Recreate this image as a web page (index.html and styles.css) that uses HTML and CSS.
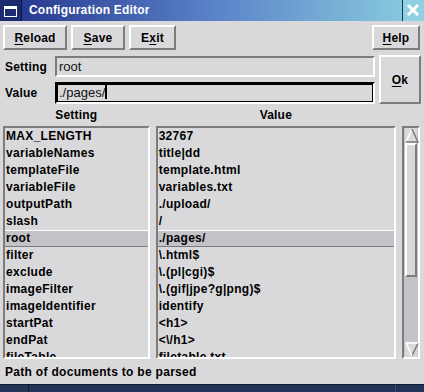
FILE: index.html
```html
<!DOCTYPE html>
<html>
<head>
    <title>Configuration Editor</title>
    <meta charset="UTF-8">
    <link rel="stylesheet" href="styles.css">
</head>
<body>

<div class="titlebar">
    <div class="winicon">
        <svg width="21" height="21" viewBox="0 0 21 21">
            <rect x="4.5" y="6.5" width="12" height="10" fill="none" stroke="#fff" stroke-width="1"/>
            <rect x="4" y="6" width="13" height="3" fill="#fff"/>
        </svg>
    </div>
    <div class="title">Configuration Editor</div>
    <div class="closebox">
        <svg width="21" height="21" viewBox="0 0 21 21">
            <path d="M5 5 L15 15 M15 5 L5 15" stroke="#fff" stroke-width="3"/>
        </svg>
    </div>
</div>

<div class="toolbar">
    <button class="btn reload"><u>R</u>eload</button>
    <button class="btn save"><u>S</u>ave</button>
    <button class="btn exit">E<u>x</u>it</button>
    <span class="spacer"></span>
    <button class="btn help"><u>H</u>elp</button>
</div>

<div class="form">
    <div class="fields">
        <div class="row">
            <label class="lbl">Setting</label>
            <div class="entry">root</div>
        </div>
        <div class="row">
            <label class="lbl">Value</label>
            <div class="entry focus">./pages/<span class="caret"></span></div>
        </div>
    </div>
    <button class="btn ok"><u>O</u>k</button>
</div>

<div class="headers">
    <div class="head keyhead">Setting</div>
    <div class="head valhead">Value</div>
    <div class="head sbhead"></div>
</div>

<div class="lists">
    <div class="listbox keys">
        <div class="item">MAX_LENGTH</div>
        <div class="item">variableNames</div>
        <div class="item">templateFile</div>
        <div class="item">variableFile</div>
        <div class="item">outputPath</div>
        <div class="item">slash</div>
        <div class="item sel">root</div>
        <div class="item">filter</div>
        <div class="item">exclude</div>
        <div class="item">imageFilter</div>
        <div class="item">imageIdentifier</div>
        <div class="item">startPat</div>
        <div class="item">endPat</div>
        <div class="item">fileTable</div>
    </div>
    <div class="listbox vals">
        <div class="item">32767</div>
        <div class="item">title|dd</div>
        <div class="item">template.html</div>
        <div class="item">variables.txt</div>
        <div class="item">./upload/</div>
        <div class="item">/</div>
        <div class="item sel">./pages/</div>
        <div class="item">\.html$</div>
        <div class="item">\.(pl|cgi)$</div>
        <div class="item">\.(gif|jpe?g|png)$</div>
        <div class="item">identify</div>
        <div class="item">&lt;h1&gt;</div>
        <div class="item">&lt;\/h1&gt;</div>
        <div class="item">filetable.txt</div>
    </div>
    <div class="scrollbar">
        <div class="arrow">
            <svg width="14" height="15" viewBox="0 0 14 15">
                <polygon points="7,1 13,14 1,14" fill="#dadada"/>
                <path d="M7 1 L1 14" stroke="#fff" stroke-width="1.5" fill="none"/>
                <path d="M7 1 L13 14 L1 14" stroke="#7a7a7a" stroke-width="1.5" fill="none"/>
            </svg>
        </div>
        <div class="thumb"></div>
        <div class="trough"></div>
        <div class="arrow">
            <svg width="14" height="15" viewBox="0 0 14 15">
                <polygon points="1,1 13,1 7,14" fill="#dadada"/>
                <path d="M13 1 L7 14" stroke="#7a7a7a" stroke-width="1.5" fill="none"/>
                <path d="M7 14 L1 1 L13 1" stroke="#fff" stroke-width="1.5" fill="none"/>
            </svg>
        </div>
    </div>
</div>

<div class="status">Path of documents to be parsed</div>

<div class="taskbar">
    <div class="task first"></div>
    <div class="task middle"></div>
    <div class="task last"></div>
</div>

</body>
</html>
```

FILE: styles.css
```css
body {
    margin: 0;
    width: 424px;
    height: 392px;
    overflow: hidden;
    background-color: #d9d9db;
    font-family: "Liberation Sans", Arial, sans-serif;
    font-size: 12px;
    font-weight: bold;
    color: #000;
}

/* window title */
.titlebar {
    display: flex;
    height: 21px;
    background: linear-gradient(to right, #22328a, #5a82c8 50%, #8ccfe0);
}
.winicon {
    width: 21px;
    height: 21px;
    background-color: #1c2a6e;
    border-right: 1px solid #0c1440;
}
.title {
    flex: 1;
    color: #fff;
    line-height: 21px;
    padding-left: 7px;
    letter-spacing: 0.2px;
}
.closebox {
    width: 21px;
    height: 21px;
    background-color: #8ed2e2;
    border-left: 1px solid #1c3050;
}

/* raised motif style buttons */
.btn {
    font-family: inherit;
    font-size: 12px;
    font-weight: bold;
    color: #000;
    background-color: #d9d9db;
    padding: 0;
    border: 2px solid;
    border-color: #fff #7c7c7c #7c7c7c #fff;
    letter-spacing: 0.2px;
}
.btn u {
    text-decoration-thickness: 1px;
    text-underline-offset: 2px;
}

.toolbar {
    display: flex;
    gap: 4px;
    padding: 4px 4px 0 3px;
    height: 25px;
}
.toolbar .btn {
    height: 25px;
}
.reload { width: 64px; }
.save { width: 54px; }
.exit { width: 47px; }
.help { width: 48px; }
.spacer { flex: 1; }

/* entry rows */
.form {
    display: flex;
    gap: 4px;
    padding: 5px 3px 0 5px;
}
.fields {
    display: flex;
    flex-direction: column;
    gap: 5px;
    padding-top: 1px;
}
.row {
    display: flex;
    align-items: center;
}
.lbl {
    width: 50px;
    letter-spacing: 0.2px;
}
.entry {
    box-sizing: border-box;
    width: 320px;
    height: 21px;
    border: 2px solid;
    border-color: #7c7c7c #fff #fff #7c7c7c;
    font-weight: normal;
    font-size: 13px;
    line-height: 17px;
    padding-left: 2px;
    color: #111;
}
.entry.focus {
    height: 22px;
    box-shadow: inset 0 0 0 1px #000;
    border-color: #000 #fff #fff #000;
}
.caret {
    display: inline-block;
    width: 2px;
    height: 14px;
    background-color: #000;
    vertical-align: -2px;
    margin-left: 0;
}
.ok {
    width: 42px;
    height: 49px;
}

/* column headers */
.headers {
    display: flex;
    gap: 6px;
    padding: 5px 4px 0 3px;
    height: 17px;
}
.head {
    text-align: center;
    line-height: 12px;
    letter-spacing: 0.2px;
}
.keyhead { width: 147px; }
.valhead { width: 241px; }
.sbhead { width: 18px; }

/* lists */
.lists {
    display: flex;
    gap: 6px;
    padding: 0 4px 0 3px;
    height: 233px;
}
.listbox {
    box-sizing: border-box;
    height: 233px;
    overflow: hidden;
    border: 2px solid;
    border-color: #7c7c7c #fff #fff #7c7c7c;
}
.keys { width: 147px; }
.vals { width: 241px; }
.item {
    height: 17px;
    line-height: 17px;
    padding-left: 1px;
    white-space: nowrap;
    letter-spacing: 0.3px;
}
.item.sel {
    background-color: #c3c3c7;
    box-shadow: inset 0 1px 0 #fff, inset 0 -1px 0 #7c7c7c;
}

.scrollbar {
    box-sizing: border-box;
    width: 18px;
    height: 233px;
    display: flex;
    flex-direction: column;
    border: 2px solid;
    border-color: #7c7c7c #fff #fff #7c7c7c;
    background-color: #c3c3c7;
    padding: 0 1px;
}
.arrow {
    height: 15px;
    background-color: #d9d9db;
}
.arrow svg {
    display: block;
}
.thumb {
    box-sizing: border-box;
    height: 134px;
    background-color: #d9d9db;
    border: 2px solid;
    border-color: #fff #7c7c7c #7c7c7c #fff;
}
.trough {
    flex: 1;
}

/* status line */
.status {
    padding: 6px 0 0 5px;
    height: 19px;
    line-height: 14px;
    letter-spacing: 0.3px;
}

.taskbar {
    display: flex;
    height: 8px;
    background-color: #1e2f4e;
    border-top: 1px solid #0e1a30;
}
.task {
    height: 8px;
    background-color: #223456;
}
.first { width: 28px; border-right: 1px solid #0e1a30; }
.middle { flex: 1; border-right: 1px solid #3a4e70; }
.last { width: 28px; }
```
